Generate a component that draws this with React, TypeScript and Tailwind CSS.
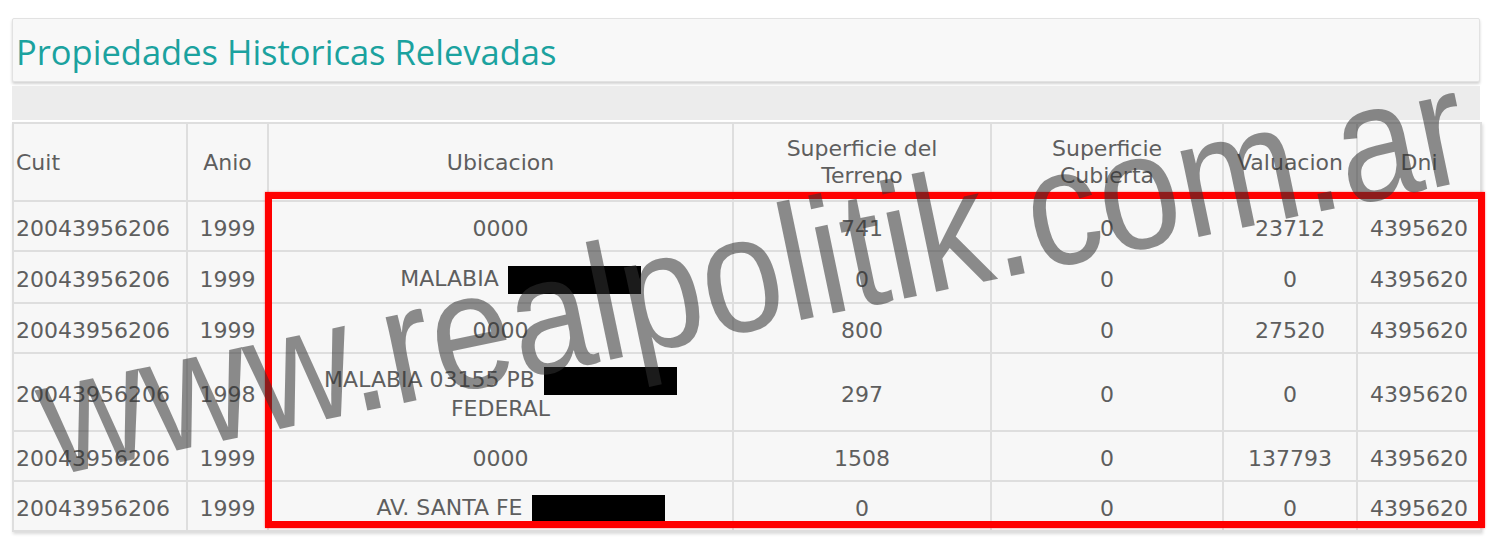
import React from 'react';

type Row = {
  cuit: string;
  anio: string;
  ubic: React.ReactNode;
  terreno: string;
  cubierta: string;
  valuacion: string;
  dni: string;
  tall?: boolean;
};

const Redacted = ({ className = '' }: { className?: string }) => (
  <span className={`inline-block align-middle h-[28px] w-[133px] bg-black ${className}`} />
);

const rows: Row[] = [
  { cuit: '20043956206', anio: '1999', ubic: '0000', terreno: '741', cubierta: '0', valuacion: '23712', dni: '4395620' },
  {
    cuit: '20043956206',
    anio: '1999',
    ubic: (
      <span className="pl-10">
        MALABIA <Redacted className="ml-[2px]" />
      </span>
    ),
    terreno: '0',
    cubierta: '0',
    valuacion: '0',
    dni: '4395620',
  },
  { cuit: '20043956206', anio: '1999', ubic: '0000', terreno: '800', cubierta: '0', valuacion: '27520', dni: '4395620' },
  {
    cuit: '20043956206',
    anio: '1998',
    ubic: (
      <>
        MALABIA 03155 PB <Redacted className="ml-[2px]" />
        <br />
        FEDERAL
      </>
    ),
    terreno: '297',
    cubierta: '0',
    valuacion: '0',
    dni: '4395620',
    tall: true,
  },
  { cuit: '20043956206', anio: '1999', ubic: '0000', terreno: '1508', cubierta: '0', valuacion: '137793', dni: '4395620' },
  {
    cuit: '20043956206',
    anio: '1999',
    ubic: (
      <span className="pl-10">
        AV. SANTA FE <Redacted className="ml-[2px]" />
      </span>
    ),
    terreno: '0',
    cubierta: '0',
    valuacion: '0',
    dni: '4395620',
  },
];

const cell = 'border-2 border-[#dedede] bg-[#f7f7f7] text-center align-middle px-1';

export default function App() {
  return (
    <div className="relative w-[1500px] h-[542px] overflow-hidden bg-white font-['DejaVu_Sans',sans-serif] text-[22px] text-[#5e5e5e]">
      <div className="w-[1468px] ml-[12px] pt-[18px]">
        <div className="h-[64px] flex items-center pl-[3px] pt-1 bg-[#f8f8f8] border border-[#e2e2e2] rounded-[2px] shadow-[0_2px_3px_rgba(0,0,0,0.18)]">
          <h1 className="font-['Open_Sans',sans-serif] text-[34.5px] leading-none text-[#1ba29f]">
            Propiedades Historicas Relevadas
          </h1>
        </div>

        <div className="mt-[4px] h-[34px] bg-[#ececec]" />

        <table className="mt-[2px] w-[1468px] table-fixed border-collapse leading-[27px] shadow-[1px_2px_3px_rgba(0,0,0,0.15)]">
          <colgroup>
            <col className="w-[174px]" />
            <col className="w-[81px]" />
            <col className="w-[465px]" />
            <col className="w-[258px]" />
            <col className="w-[232px]" />
            <col className="w-[134px]" />
            <col className="w-[124px]" />
          </colgroup>
          <thead>
            <tr className="h-[78px]">
              <th className={`${cell} font-normal !text-left !pl-[2px]`}>Cuit</th>
              <th className={`${cell} font-normal`}>Anio</th>
              <th className={`${cell} font-normal`}>Ubicacion</th>
              <th className={`${cell} font-normal`}>
                Superficie del
                <br />
                Terreno
              </th>
              <th className={`${cell} font-normal`}>
                Superficie
                <br />
                Cubierta
              </th>
              <th className={`${cell} font-normal`}>Valuacion</th>
              <th className={`${cell} font-normal`}>Dni</th>
            </tr>
          </thead>
          <tbody>
            {rows.map((r, i) => (
              <tr key={i} className={r.tall ? 'h-[78px]' : i === 1 ? 'h-[52px]' : 'h-[50px]'}>
                <td className={`${cell} !text-left !pl-[2px] pt-1`}>{r.cuit}</td>
                <td className={`${cell} pt-1`}>{r.anio}</td>
                <td className={`${cell} pt-1`}>{r.ubic}</td>
                <td className={`${cell} pt-1`}>{r.terreno}</td>
                <td className={`${cell} pt-1`}>{r.cubierta}</td>
                <td className={`${cell} pt-1`}>{r.valuacion}</td>
                <td className={`${cell} pt-1`}>{r.dni}</td>
              </tr>
            ))}
          </tbody>
        </table>
      </div>

      {/* red annotation box */}
      <div className="absolute left-[265px] top-[192px] w-[1220px] h-[336px] border-[7px] border-[#ff0000] shadow-[0_0_2px_rgba(255,0,0,0.5)]" />

      {/* watermark */}
      <div className="absolute left-[752px] top-[272px] -translate-x-1/2 -translate-y-1/2 rotate-[-11.8deg] pointer-events-none select-none">
        <div className="scale-x-[0.88] whitespace-nowrap font-['Liberation_Sans',Arial,sans-serif] text-[166px] leading-none text-[rgba(50,50,50,0.55)]">
          www.realpolitik.com.ar
        </div>
      </div>
    </div>
  );
}
